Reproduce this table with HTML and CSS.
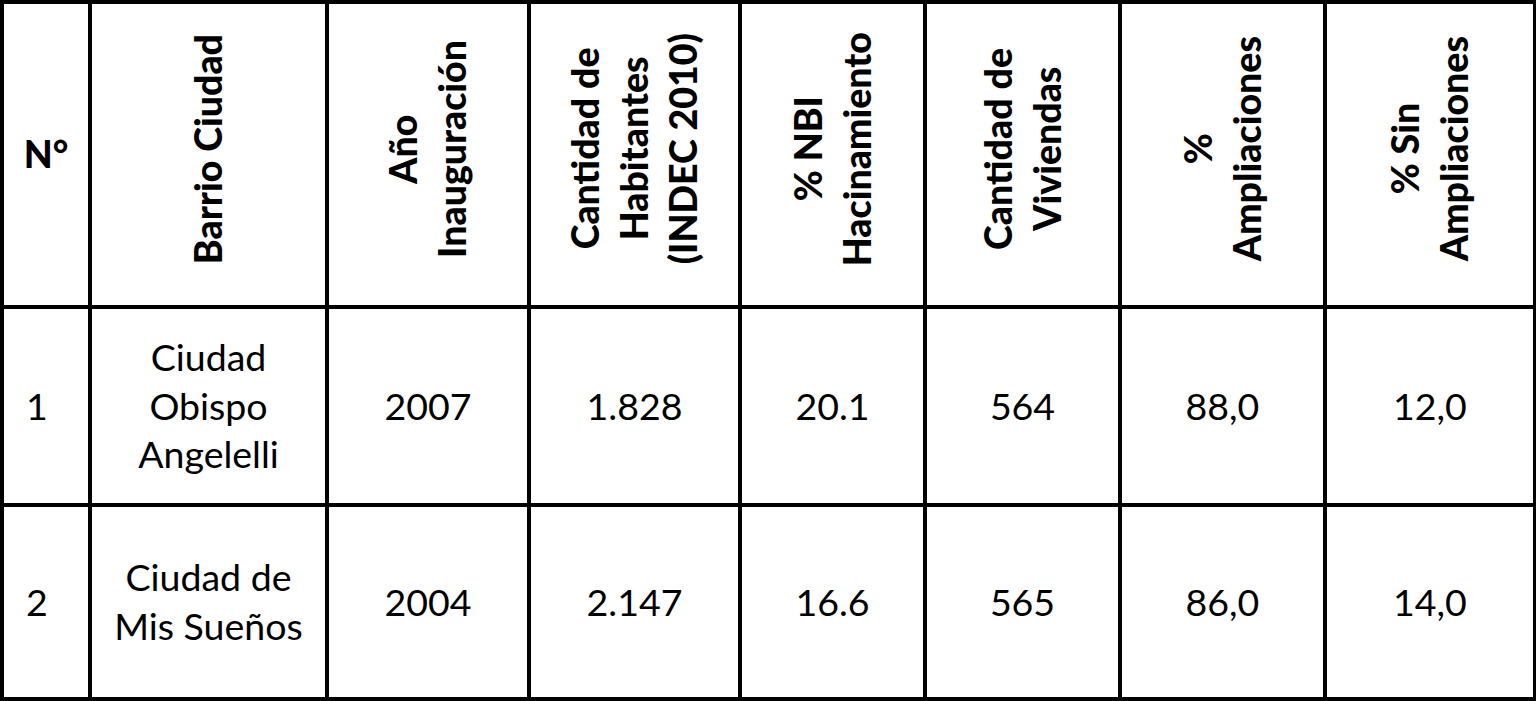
FILE: index.html
```html
<!DOCTYPE html>
<html lang="es">
<head>
  <meta charset="UTF-8">
  <meta name="viewport" content="width=device-width, initial-scale=1.0">
  <title>Barrios Ciudad</title>
  <link rel="stylesheet" href="styles.css">
</head>
<body>
  <table class="barrios">
    <colgroup>
      <col class="c-num">
      <col class="c-barrio">
      <col class="c-anio">
      <col class="c-hab">
      <col class="c-nbi">
      <col class="c-viv">
      <col class="c-amp">
      <col class="c-sin">
    </colgroup>
    <thead>
      <tr>
        <th>N°</th>
        <th><div class="vertical">Barrio Ciudad</div></th>
        <th><div class="vertical">Año<br>Inauguración</div></th>
        <th><div class="vertical">Cantidad de<br>Habitantes<br>(INDEC 2010)</div></th>
        <th><div class="vertical">% NBI<br>Hacinamiento</div></th>
        <th><div class="vertical">Cantidad de<br>Viviendas</div></th>
        <th><div class="vertical">%<br>Ampliaciones</div></th>
        <th><div class="vertical">% Sin<br>Ampliaciones</div></th>
      </tr>
    </thead>
    <tbody>
      <tr class="row-1">
        <td class="num">1</td>
        <td>Ciudad<br>Obispo<br>Angelelli</td>
        <td>2007</td>
        <td>1.828</td>
        <td>20.1</td>
        <td>564</td>
        <td>88,0</td>
        <td>12,0</td>
      </tr>
      <tr class="row-2">
        <td class="num">2</td>
        <td>Ciudad de<br>Mis Sueños</td>
        <td>2004</td>
        <td>2.147</td>
        <td>16.6</td>
        <td>565</td>
        <td>86,0</td>
        <td>14,0</td>
      </tr>
    </tbody>
  </table>
</body>
</html>
```

FILE: styles.css
```css
body {
  margin: 0;
  background: #fff;
  font-family: Lato, "Open Sans", sans-serif;
  color: #000;
}

.barrios {
  border-collapse: collapse;
  table-layout: fixed;
  width: 1535px;
  font-size: 37.5px;
  line-height: 48.8px;
}

.barrios th,
.barrios td {
  border: 4px solid #000;
  padding: 0 4px;
  text-align: center;
  vertical-align: middle;
}

.c-num { width: 88px; }
.c-barrio { width: 237px; }
.c-anio { width: 202px; }
.c-hab { width: 211px; }
.c-nbi { width: 185px; }
.c-viv { width: 195px; }
.c-amp { width: 205px; }
.c-sin { width: 210px; }

thead tr { height: 305px; }
.row-1 { height: 198px; }
.row-2 { height: 194px; }

.barrios th {
  font-weight: 900;
}

.vertical {
  display: inline-block;
  writing-mode: vertical-rl;
  transform: rotate(180deg);
  text-align: center;
}

.barrios td.num {
  text-align: left;
  padding-left: 22px;
}
```
